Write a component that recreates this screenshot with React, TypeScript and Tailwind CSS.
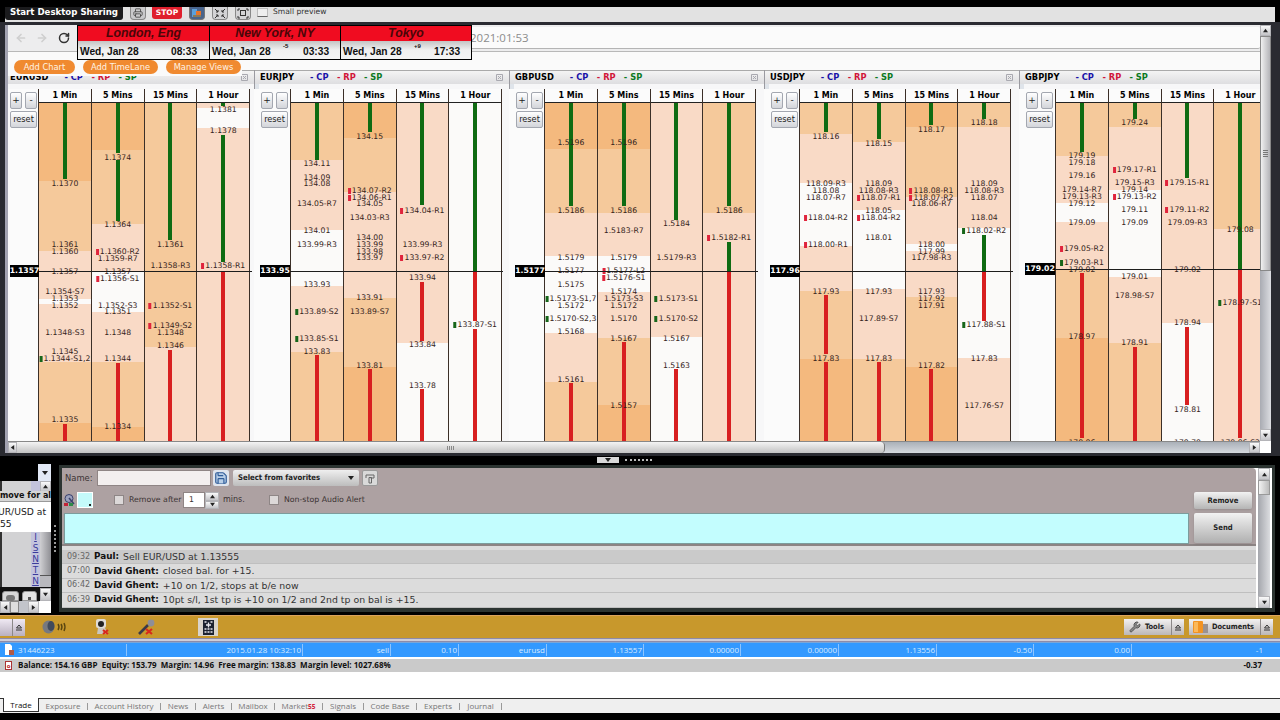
import React from 'react';
import { RotateCw, ArrowLeft, ArrowRight, Printer, Save, Wrench } from 'lucide-react';

type Mark = 'r' | 'g';
type Label = [y: number, text: string, mark?: Mark];

interface Lane {
  zones: [end: number, shade: number][];
  bars: [from: number, to: number, color: Mark][];
  labels: Label[];
}

interface Pair {
  name: string;
  price: string;
  priceY: number;
  width: string;
  gutter: string;
  lanes: Lane[];
}

// ladder body starts at this line, all y values below are screen lines
const TOP = 103;

const SHADES = ['bg-[#fbfaf9]', 'bg-[#f9dac6]', 'bg-[#f5c99b]', 'bg-[#f4b97e]'];
const FRAMES = ['1 Min', '5 Mins', '15 Mins', '1 Hour'];

const PAIRS: Pair[] = [
  {
    name: 'EURUSD', price: '1.1357', priceY: 271, width: 'w-[246px]', gutter: 'w-[30px]',
    lanes: [
      {
        zones: [[181, 3], [251, 2], [299, 1], [304, 0], [362, 1], [423, 2], [441, 3]],
        bars: [[103, 179, 'g'], [424, 441, 'r']],
        labels: [[184, '1.1370'], [245, '1.1361'], [252, '1.1360'], [272, '1.1357'], [292, '1.1354-S7'], [299, '1.1353'], [305.5, '1.1352'], [333, '1.1348-S3'], [352, '1.1345'], [359, '1.1344-S1,2', 'g'], [419.5, '1.1335']],
      },
      {
        zones: [[150, 3], [224, 2], [272, 1], [312, 0], [362, 1], [427, 2], [441, 3]],
        bars: [[103, 153, 'g'], [160, 221, 'g'], [363, 441, 'r']],
        labels: [[157.5, '1.1374'], [225, '1.1364'], [251.5, '1.1360-R2', 'r'], [258.5, '1.1359-R7'], [272, '1.1357'], [279, '1.1356-S1', 'r'], [305.5, '1.1352-S3'], [312, '1.1351'], [333, '1.1348'], [359, '1.1344'], [426.5, '1.1334']],
      },
      {
        zones: [[347, 2], [441, 1]],
        bars: [[103, 240, 'g'], [350, 441, 'r']],
        labels: [[245, '1.1361'], [265.5, '1.1358-R3'], [305.5, '1.1352-S1', 'r'], [326, '1.1349-S2', 'r'], [333, '1.1348'], [346, '1.1346']],
      },
      {
        zones: [[108, 1], [128, 0], [441, 1]],
        bars: [[103, 106, 'g'], [135, 262, 'g'], [272, 441, 'r']],
        labels: [[110, '1.1381'], [131, '1.1378'], [265.5, '1.1358-R1', 'r']],
      },
    ],
  },
  {
    name: 'EURJPY', price: '133.95', priceY: 271, width: 'w-[255px]', gutter: 'w-[36px]',
    lanes: [
      {
        zones: [[160, 2], [230, 1], [286, 0], [352, 1], [441, 2]],
        bars: [[103, 160, 'g'], [355, 441, 'r']],
        labels: [[164, '134.11'], [178, '134.09'], [184, '134.08'], [204, '134.05-R7'], [231, '134.01'], [245, '133.99-R3'], [285, '133.93'], [312, '133.89-S2', 'g'], [339, '133.85-S1', 'g'], [352, '133.83']],
      },
      {
        zones: [[138, 3], [192, 2], [298, 1], [367, 2], [441, 3]],
        bars: [[103, 132, 'g'], [369, 441, 'r']],
        labels: [[136.5, '134.15'], [190.5, '134.07-R2', 'r'], [197.5, '134.06-R1', 'r'], [204, '134.05'], [217.5, '134.03-R3'], [238, '134.00'], [245, '133.99'], [252, '133.98'], [257.5, '133.97'], [298, '133.91'], [312, '133.89-S7'], [366, '133.81']],
      },
      {
        zones: [[343, 1], [441, 0]],
        bars: [[103, 205, 'g'], [282, 341, 'r'], [389, 441, 'r']],
        labels: [[211, '134.04-R1', 'r'], [245, '133.99-R3'], [258, '133.97-R2', 'r'], [278, '133.94'], [345, '133.84'], [386, '133.78']],
      },
      {
        zones: [[441, 0]],
        bars: [[103, 271, 'g'], [271, 321, 'r'], [329, 441, 'r']],
        labels: [[325, '133.87-S1', 'g']],
      },
    ],
  },
  {
    name: 'GBPUSD', price: '1.5177', priceY: 271, width: 'w-[255px]', gutter: 'w-[35px]',
    lanes: [
      {
        zones: [[149, 3], [213, 2], [256, 1], [333, 0], [382, 1], [441, 2]],
        bars: [[103, 206, 'g'], [383, 441, 'r']],
        labels: [[143, '1.5196'], [211, '1.5186'], [258, '1.5179'], [271, '1.5177'], [285, '1.5175'], [298.5, '1.5173-S1,7', 'g'], [305.5, '1.5172'], [319, '1.5170-S2,3', 'g'], [332, '1.5168'], [380, '1.5161']],
      },
      {
        zones: [[149, 3], [213, 2], [256, 1], [292, 0], [338, 1], [405, 2], [441, 3]],
        bars: [[103, 206, 'g'], [342, 441, 'r']],
        labels: [[143, '1.5196'], [211, '1.5186'], [231, '1.5183-R7'], [258, '1.5179'], [271, '1.5177-L2', 'r'], [278, '1.5176-S1', 'r'], [292, '1.5174'], [298.5, '1.5173-S3'], [305.5, '1.5172'], [319, '1.5170'], [339, '1.5167'], [406, '1.5157']],
      },
      {
        zones: [[337, 1], [441, 0]],
        bars: [[103, 220, 'g'], [369, 441, 'r']],
        labels: [[224, '1.5184'], [258, '1.5179-R3'], [298.5, '1.5173-S1', 'g'], [319, '1.5170-S2', 'g'], [339, '1.5167'], [366, '1.5163']],
      },
      {
        zones: [[213, 2], [441, 1]],
        bars: [[103, 206, 'g'], [242, 271, 'g'], [271, 441, 'r']],
        labels: [[211, '1.5186'], [238, '1.5182-R1', 'r']],
      },
    ],
  },
  {
    name: 'USDJPY', price: '117.96', priceY: 271, width: 'w-[255px]', gutter: 'w-[35px]',
    lanes: [
      {
        zones: [[134, 2], [183, 1], [246, 0], [291, 1], [359, 2], [441, 3]],
        bars: [[103, 132, 'g'], [295, 354, 'r'], [362, 441, 'r']],
        labels: [[136.5, '118.16'], [183.5, '118.09-R3'], [190.5, '118.08'], [197.5, '118.07-R7'], [217.5, '118.04-R2', 'r'], [245, '118.00-R1', 'r'], [292, '117.93'], [359, '117.83']],
      },
      {
        zones: [[142, 2], [210, 1], [289, 0], [359, 1], [441, 2]],
        bars: [[103, 139, 'g'], [362, 441, 'r']],
        labels: [[143.5, '118.15'], [183.5, '118.09'], [190.5, '118.08-R3'], [197.5, '118.07-R1', 'r'], [211, '118.05'], [217.5, '118.04-R2', 'r'], [238, '118.01'], [292, '117.93'], [319, '117.89-S7'], [359, '117.83']],
      },
      {
        zones: [[127, 3], [197, 2], [244, 1], [251, 0], [297, 1], [367, 2], [441, 3]],
        bars: [[103, 125, 'g'], [369, 441, 'r']],
        labels: [[130, '118.17'], [190.5, '118.08-R1', 'r'], [197.5, '118.07-R2', 'r'], [204, '118.06-R7'], [245, '118.00'], [252, '117.99'], [258, '117.98-R3'], [292, '117.93'], [298.5, '117.92'], [305.5, '117.91'], [366, '117.82']],
      },
      {
        zones: [[127, 2], [228, 1], [358, 0], [441, 1]],
        bars: [[103, 119, 'g'], [235, 271, 'g'], [271, 321, 'r']],
        labels: [[123, '118.18'], [183.5, '118.09'], [190.5, '118.08-R3'], [197.5, '118.07'], [217.5, '118.04'], [231, '118.02-R2', 'g'], [325, '117.88-S1', 'g'], [359, '117.83'], [406, '117.76-S7']],
      },
    ],
  },
  {
    name: 'GBPJPY', price: '179.02', priceY: 269, width: 'w-[255px]', gutter: 'w-[36px]',
    lanes: [
      {
        zones: [[156, 2], [203, 1], [222, 0], [270, 1], [338, 2], [441, 3]],
        bars: [[103, 152, 'g'], [273, 438, 'r']],
        labels: [[156, '179.19'], [163, '179.18'], [176, '179.16'], [190, '179.14-R7'], [197, '179.13-R3'], [203.5, '179.12'], [223, '179.09'], [249, '179.05-R2', 'r'], [263, '179.03-R1', 'g'], [270, '179.02'], [337, '178.97'], [443, '178.86']],
      },
      {
        zones: [[127, 2], [190, 1], [277, 0], [343, 1], [441, 2]],
        bars: [[103, 119, 'g'], [347, 441, 'r']],
        labels: [[123, '179.24'], [170, '179.17-R1', 'r'], [183, '179.15-R3'], [190, '179.14'], [197, '179.13-R2', 'r'], [209.5, '179.11'], [223, '179.09'], [277, '179.01'], [296, '178.98-S7'], [343, '178.91']],
      },
      {
        zones: [[323, 1], [441, 0]],
        bars: [[103, 178, 'g'], [327, 405, 'r']],
        labels: [[183, '179.15-R1', 'r'], [209.5, '179.11-R2', 'r'], [223, '179.09-R3'], [270, '179.02'], [323, '178.94'], [410, '178.81'], [443, '178.78']],
      },
      {
        zones: [[229, 2], [441, 1]],
        bars: [[103, 269, 'g'], [269, 438, 'r']],
        labels: [[230, '179.08'], [303, '178.97-S1', 'g'], [443, '178.86-S2']],
      },
    ],
  },
];

const CLOCKS = [
  { city: 'London, Eng', offset: '', time: '08:33' },
  { city: 'New York, NY', offset: '-5', time: '03:33' },
  { city: 'Tokyo', offset: '+9', time: '17:33' },
];

const MESSAGES = [
  { time: '09:32', who: 'Paul:', text: 'Sell EUR/USD at 1.13555' },
  { time: '07:00', who: 'David Ghent:', text: 'closed bal. for +15.' },
  { time: '06:42', who: 'David Ghent:', text: '+10 on 1/2, stops at b/e now' },
  { time: '06:39', who: 'David Ghent:', text: '10pt s/l, 1st tp is +10 on 1/2 and 2nd tp on bal is +15.' },
];

const ORDER_CELLS: [string, string][] = [
  ['w-[176px]', '2015.01.28 10:32:10'],
  ['w-[88px]', 'sell'],
  ['w-[68px]', '0.10'],
  ['w-[88px]', 'eurusd'],
  ['w-[97px]', '1.13557'],
  ['w-[97px]', '0.00000'],
  ['w-[98px]', '0.00000'],
  ['w-[98px]', '1.13556'],
  ['w-[97px]', '-0.50'],
  ['w-[98px]', '0.00'],
];

const TABS: [string, string][] = [
  ['Exposure', 'w-[49px]'],
  ['Account History', 'w-[73px]'],
  ['News', 'w-[35px]'],
  ['Alerts', 'w-[36px]'],
  ['Mailbox', 'w-[43px]'],
  ['Market', 'w-[48px]'],
  ['Signals', 'w-[41px]'],
  ['Code Base', 'w-[53px]'],
  ['Experts', 'w-[43px]'],
  ['Journal', 'w-[42px]'],
];

const Arrow: React.FC<{ d: 'up' | 'down' | 'left' | 'right'; size?: number }> = ({ d, size = 6 }) => {
  const pts = { up: '0,5 3,1 6,5', down: '0,1 3,5 6,1', left: '5,0 1,3 5,6', right: '1,0 5,3 1,6' }[d];
  return (
    <svg width={size} height={size} viewBox="0 0 6 6" className="shrink-0">
      <polygon points={pts} fill="#222" />
    </svg>
  );
};

const ScrollButton: React.FC<{ d: 'up' | 'down' | 'left' | 'right'; className?: string }> = ({ d, className = '' }) => (
  <div className={`flex shrink-0 items-center justify-center border border-[#b4b4b8] bg-linear-to-b from-[#fafafa] to-[#c4c4c8] ${className}`}>
    <Arrow d={d} size={5} />
  </div>
);

const SmallButton: React.FC<{ className?: string; children: React.ReactNode }> = ({ className = '', children }) => (
  <div className={`flex items-center justify-center rounded-[2px] border border-[#a3a7b0] bg-linear-to-b from-white to-[#d3d5da] text-[#222] ${className}`}>
    {children}
  </div>
);

const LaneView: React.FC<{ title: string; lane: Lane; last: boolean }> = ({ title, lane, last }) => (
  <div className={`flex shrink-0 flex-col border-l border-[#3b2f28] ${last ? 'w-[53.8px] border-r' : 'w-[52.8px]'}`}>
    <div className="flex h-[14px] items-center justify-center border-b border-[#222] bg-[#fbfbfb] text-[8px] font-bold leading-none text-black">
      {title}
    </div>
    <div className="relative flex h-[338px] flex-col overflow-hidden">
      {lane.zones.map(([end, shade], i) => (
        <div
          key={end}
          className={`shrink-0 ${SHADES[shade]}`}
          style={{ height: end - (i ? lane.zones[i - 1][0] : TOP) }}
        />
      ))}
      {lane.bars.map(([from, to, color]) => (
        <div
          key={from}
          className={`absolute left-1/2 w-[4px] -translate-x-1/2 ${color === 'g' ? 'bg-[#0f6b12]' : 'bg-[#d81f20]'}`}
          style={{ top: from - TOP, height: to - from }}
        />
      ))}
      {lane.labels.map(([y, text, mark]) => (
        <div
          key={y}
          className="absolute left-1/2 flex h-[8px] -translate-x-1/2 items-center gap-px whitespace-nowrap text-[7.7px] leading-none text-[#35241b]"
          style={{ top: y - TOP - 4 }}
        >
          {mark && <span className={`h-[6px] w-[3px] ${mark === 'g' ? 'bg-[#17661a]' : 'bg-[#e0243c]'}`} />}
          {text}
        </div>
      ))}
    </div>
  </div>
);

const PairPanel: React.FC<{ pair: Pair; first: boolean }> = ({ pair, first }) => (
  <div className={`relative flex shrink-0 flex-col bg-[#f7f7f8] ${pair.width} ${first ? '' : 'border-l border-[#9a9aa0]'}`}>
    <div className={`flex h-[14px] items-center border-t border-[#aaa] bg-linear-to-b from-[#f4f4f4] to-[#dedee0] text-[8.3px] leading-none ${first ? 'pl-[2px]' : 'pl-[5px]'}`}>
      <span className="font-bold text-black">{pair.name}</span>
      <span className="ml-[16px] w-[27px] font-bold text-[#1a12a8]">- CP</span>
      <span className="w-[27px] font-bold text-[#d11539]">- RP</span>
      <span className="font-bold text-[#0c7a22]">- SP</span>
      <svg className="ml-auto mr-[6px]" width="7" height="7" viewBox="0 0 7 7" fill="none" stroke="#a9a9b0">
        <path d="M.5.5h6v6h-6zM2 2l3 3M5 2L2 5" />
      </svg>
    </div>
    <div className={`flex pt-[5px] ${first ? '' : 'border-l-4 border-[#dfe4ea]'}`}>
      <div className={`shrink-0 bg-[#fbfbfb] ${pair.gutter} ${first ? 'pl-[2px]' : '-ml-[5px] pl-[7px]'}`}>
        <div className="mt-[3px] flex gap-[3px] text-[9px] leading-none">
          <SmallButton className="h-[17px] w-[12px]">+</SmallButton>
          <SmallButton className="h-[17px] w-[12px]">-</SmallButton>
        </div>
        <SmallButton className="mt-[2px] h-[17px] w-[27px] text-[8.2px] leading-none">reset</SmallButton>
      </div>
      {pair.lanes.map((lane, i) => (
        <LaneView key={FRAMES[i]} title={FRAMES[i]} lane={lane} last={i === 3} />
      ))}
    </div>
    {/* current price marker */}
    <div className="absolute left-0 flex h-[12px] w-full items-center" style={{ top: pair.priceY - 76 }}>
      <span className={`flex h-[12px] shrink-0 items-center justify-center bg-black text-[7.7px] font-bold leading-none text-white ${first ? 'ml-[2px] w-[29px]' : 'ml-[5px] w-[30px]'}`}>
        {pair.price}
      </span>
      <span className="h-px w-[213px] shrink-0 bg-[#1d1d1d]" />
    </div>
  </div>
);

const SharingBar: React.FC = () => (
  <div className="mx-[5px] flex h-[15px] items-start overflow-hidden bg-[#e2e2e2] pr-2">
    <div className="flex h-[13px] w-[118px] items-center justify-center rounded-b-[3px] bg-[#1b1b1d] text-[8.6px] font-bold leading-none text-white">
      <span className="mb-[3px] whitespace-nowrap">Start Desktop Sharing</span>
    </div>
    <div className="ml-[7px] flex h-[13px] w-[16px] items-center justify-center rounded-b border border-t-0 border-[#888] bg-[#c9c9cb]">
      <Printer size={10} className="text-[#444]" />
    </div>
    <div className="ml-[6px] flex h-[12px] w-[30px] items-center justify-center rounded-b-[3px] bg-[#df1f2d] text-[7.5px] font-bold leading-none text-white">STOP</div>
    <div className="ml-[7px] flex h-[13px] w-[16px] items-center justify-center rounded-b border border-t-0 border-[#777] bg-[#49648c]">
      <svg width="10" height="9" viewBox="0 0 10 9">
        <rect x="0" y="0" width="5" height="8" fill="#5aa0dc" />
        <rect x="4" y="2" width="5" height="5" fill="#e8742a" />
        <rect x="1" y="6" width="8" height="2" fill="#8a7a5a" />
      </svg>
    </div>
    <div className="ml-[7px] flex h-[13px] w-[16px] items-center justify-center rounded-b border border-t-0 border-[#888] bg-[#d3d3d5]">
      <svg width="12" height="11" viewBox="0 0 12 11" stroke="#333" fill="none">
        <path d="M1 1l3 3M11 1L8 4M1 10l3-3M11 10L8 7M4 2v2H2M8 2v2h2M4 9V7H2M8 9V7h2" />
      </svg>
    </div>
    <div className="ml-[7px] flex h-[13px] w-[16px] items-center justify-center rounded-b border border-t-0 border-[#888] bg-[#d3d3d5]">
      <svg width="12" height="11" viewBox="0 0 12 11" stroke="#333" fill="none">
        <rect x="3.5" y="2.5" width="5" height="5" />
        <path d="M1 3V1h2M9 1h2v2M1 8v2h2M9 10h2V8" />
      </svg>
    </div>
    <div className="ml-[6px] mt-px h-[9px] w-[11px] border border-[#bbb] border-b-[#666] bg-[#eee]" />
    <span className="ml-[5px] mt-[1px] text-[7.6px] leading-none text-[#333]">Small preview</span>
  </div>
);

const WorldClock: React.FC = () => (
  <div className="absolute left-[77px] top-[25px] z-20 flex border border-black bg-[#ececec] font-['Liberation_Sans',sans-serif]">
    {CLOCKS.map((c, i) => (
      <div key={c.city} className={`h-[33px] w-[131px] ${i ? 'border-l border-black' : ''}`}>
        <div className="flex h-[15px] items-center justify-center bg-[#f00c20] text-[12.3px] font-bold italic leading-none text-[#4a0608]">
          {c.city}
        </div>
        <div className="flex h-[18px] items-center bg-linear-to-b from-[#c4c4c4] via-[#f0f0f0] to-[#f4f4f4] pl-[2px] text-[10.2px] font-bold leading-none text-[#111]">
          <span className="mt-[4px] w-[71px]">Wed, Jan 28</span>
          <span className="-mt-[8px] w-[20px] text-[6px]">{c.offset}</span>
          <span className="mt-[4px]">{c.time}</span>
        </div>
      </div>
    ))}
  </div>
);

const Pill: React.FC<{ className: string; children: React.ReactNode }> = ({ className, children }) => (
  <div className={`flex h-[14px] items-center justify-center rounded-full bg-[#f08a30] text-[8.3px] leading-none text-[#fff3e4] ${className}`}>
    {children}
  </div>
);

const BrowserPane: React.FC = () => (
  <div className="flex h-[434px] border-x-[5px] border-t-[3px] border-b-[3px] border-[#2a2b31] bg-[#2a2b31]">
    <div className="w-[3px] shrink-0 bg-[#a3a3b1]" />
    <div className="flex w-[1252px] shrink-0 flex-col overflow-hidden bg-[#fafafa]">
      <div className="flex h-[27px] shrink-0 items-center border-b border-[#b8b8b8] bg-[#ededee] pl-[7px]">
        <ArrowLeft size={12} strokeWidth={3.4} className="text-[#cfcfcf]" />
        <ArrowRight size={12} strokeWidth={3.4} className="ml-[9px] text-[#cfcfcf]" />
        <RotateCw size={12} strokeWidth={3} className="ml-[10px] text-[#333]" />
        <div className="ml-[9px] flex h-[22px] flex-1 items-center rounded-[2px] border-b border-[#b4b4b4] bg-[#fbfbfb] pl-[391px] font-['Open_Sans',sans-serif] text-[11.5px] text-[#8c8c8c]">
          2021:01:53
        </div>
      </div>
      <div className="h-[18px] shrink-0" />
      <div className="flex h-[371px] shrink-0 overflow-hidden">
        {PAIRS.map((pair, i) => (
          <PairPanel key={pair.name} pair={pair} first={i === 0} />
        ))}
      </div>
      <div className="flex h-[12px] shrink-0 border-t border-[#888] bg-linear-to-b from-[#aab0b8] to-[#d5d9de]">
        <ScrollButton d="left" className="w-[9px]" />
        <div className="flex w-[868px] items-center justify-center rounded-r-[4px] border-r border-[#777] bg-linear-to-b from-[#f4f4f4] to-[#c2c2c2]">
          <div className="flex gap-px">
            {[0, 1, 2, 3].map((n) => <span key={n} className="h-[4px] w-px bg-[#888]" />)}
          </div>
        </div>
        <ScrollButton d="right" className="ml-auto w-[11px]" />
      </div>
    </div>
    <div className="flex w-[11px] shrink-0 flex-col bg-white">
      <ScrollButton d="up" className="h-[11px] w-full" />
      <div className="flex h-[235px] flex-col items-center justify-center gap-px border border-[#888] bg-linear-to-r from-[#f0f0f0] to-[#b4b4b8]">
        {[0, 1, 2, 3].map((n) => <span key={n} className="h-px w-[5px] bg-[#777]" />)}
      </div>
      <div className="h-[158px] bg-linear-to-r from-[#a9abb2] to-[#dcdde1]" />
      <ScrollButton d="down" className="h-[12px] w-full" />
    </div>
  </div>
);

const SideFragment: React.FC = () => (
  <div className="relative flex h-[149px] w-[51px] shrink-0 flex-col overflow-hidden">
    <div className="flex h-[17px] shrink-0 justify-end">
      <div className="flex w-[13px] items-center justify-center bg-[#e2e9f6]"><Arrow d="down" /></div>
    </div>
    <div className="flex h-[106px] shrink-0 bg-[#d2d2d4]">
      <div className="w-[31px] border-l-2 border-[#333]" />
      <div className="flex w-[9px] flex-col items-center justify-end bg-[#c3c3dc] text-[9px] leading-[11px] text-[#3a3a9c] underline">
        <span>I</span><span>S</span><span>N</span><span>T</span><span>N</span>
      </div>
      <div className="flex w-[11px] flex-col">
        <ScrollButton d="up" className="h-[11px] w-full" />
        <div className="h-[84px] border-b border-[#555] bg-linear-to-r from-[#cfcfd2] to-[#8f8f94]" />
        <div className="flex-1 bg-[#b9b9be]" />
      </div>
    </div>
    <div className="flex h-[14px] items-end gap-[3px] bg-[#111]">
      <div className="ml-[2px] h-[10px] w-[18px] rounded-t-[3px] border border-[#999] bg-[#d8d8d8] px-[3px] pt-[3px]"><div className="h-[6px] rounded-full bg-[#777]" /></div>
      <div className="h-[10px] w-[15px] rounded-t-[3px] border border-[#999] bg-[#e4e4e4] px-[5px] pt-[5px]"><div className="h-[3px] bg-[#555]" /></div>
      <ScrollButton d="down" className="ml-auto h-[13px] w-[11px]" />
    </div>
    <div className="flex h-[12px] bg-[#c2c4ca]">
      <ScrollButton d="left" className="w-[10px]" />
      <div className="w-[9px] border border-[#888] bg-[#dedede]" />
      <ScrollButton d="right" className="ml-[9px] w-[11px]" />
      <div className="ml-auto w-[12px] bg-white" />
    </div>
    {/* popup cut off by the window edge */}
    <div className="absolute left-0 top-[27px] w-[51px] whitespace-nowrap bg-white">
      <div className="flex h-[11px] items-center border-b border-[#999] bg-[#d5d5d5] text-[8px] font-bold leading-none text-[#111]">move for all</div>
      <div className="h-[30px] -indent-[2px] pt-[4px] text-[9.2px] leading-[11.5px] text-[#222]">UR/USD at<br />55</div>
    </div>
  </div>
);

const CheckBox: React.FC<{ className?: string }> = ({ className = '' }) => (
  <span className={`h-[10px] w-[10px] shrink-0 border border-[#8e8686] bg-[#dcd8d8] ${className}`} />
);

const ChatPane: React.FC = () => (
  <div className="mr-[5px] mt-px flex h-[147px] min-w-0 flex-1 border-[3px] border-b-4 border-[#2c3431] bg-white">
    <div className="flex w-[1194px] shrink-0 flex-col">
      <div className="flex h-[78px] shrink-0 rounded-tr-[4px] border-b-2 border-[#8c8484] bg-[#ada1a2] pl-[2px] pt-px">
        <div className="flex w-[1125px] shrink-0 flex-col text-[7.8px] leading-none text-[#3b3333]">
          <div className="flex h-[18px] items-center pl-px">
            <span className="w-[32px] text-[8.4px]">Name:</span>
            <span className="h-[16px] w-[114px] border border-[#8f8585] bg-[#f3efef]" />
            <span className="ml-[2px] flex size-[16px] items-center justify-center rounded-[2px] bg-[#dfe5ee]">
              <Save size={14} className="text-[#2f5c98]" fill="#b9cfe8" />
            </span>
            <span className="ml-[4px] flex h-[16px] w-[126px] items-center justify-between rounded-[2px] bg-linear-to-b from-[#efefef] to-[#bdbdbd] pl-[5px] pr-[5px] font-['DejaVu_Sans_Condensed','DejaVu_Sans',sans-serif] text-[7.7px] font-bold text-[#222]">
              Select from favorites
              <Arrow d="down" />
            </span>
            <span className="ml-[3px] flex size-[16px] items-center justify-center rounded-[2px] border border-[#999] bg-[#d9d9d9]">
              <svg width="10" height="11" viewBox="0 0 10 11" fill="none" stroke="#666">
                <path d="M1 5V2h8v3H5.5M4 4.500h2.500v5.500H4z" />
              </svg>
            </span>
          </div>
          <div className="flex h-[26px] items-center">
            <svg width="11" height="13" viewBox="0 0 11 13">
              <circle cx="5" cy="4.5" r="4" fill="#9aa0bc" stroke="#39406a" />
              <path d="M5 4l5 6" stroke="#39406a" strokeWidth="1.5" />
              <rect x="0" y="9" width="4" height="3" fill="#c22336" />
              <rect x="5" y="9" width="4" height="3" fill="#2c8a48" />
            </svg>
            <span className="ml-[2px] flex size-[16px] items-end justify-end border border-white bg-[#c4fafa] p-px"><i className="size-[2px] bg-[#222]" /></span>
            <CheckBox className="ml-[21px]" />
            <span className="ml-[5px] w-[54px]">Remove after</span>
            <span className="flex h-[16px] w-[22px] items-center border border-[#8f8585] bg-white pl-[5px]">1</span>
            <span className="flex flex-col">
              <ScrollButton d="up" className="h-[9px] w-[14px]" />
              <ScrollButton d="down" className="h-[8px] w-[14px]" />
            </span>
            <span className="ml-[4px] w-[46px] text-[8px]">mins.</span>
            <CheckBox />
            <span className="ml-[5px] whitespace-nowrap">Non-stop Audio Alert</span>
          </div>
          <div className="h-[31px] border border-[#7c9c9c] bg-[#c3fdfe]" />
        </div>
        <div className="ml-[5px] flex flex-col gap-[4px] pt-[23px] font-['DejaVu_Sans_Condensed','DejaVu_Sans',sans-serif] text-[7.6px] font-bold leading-none text-[#222]">
          <div className="flex h-[17px] w-[58px] items-center justify-center rounded-[2px] bg-linear-to-b from-[#f2f2f2] to-[#b5b5b5] shadow">Remove</div>
          <div className="flex h-[30px] w-[58px] items-center justify-center rounded-[2px] bg-linear-to-b from-[#f2f2f2] to-[#b0b0b0] shadow">Send</div>
        </div>
      </div>
      <div className="flex flex-1 flex-col overflow-hidden bg-[#dcdcdc] pt-[4px]">
        {MESSAGES.map((m, i) => (
          <div key={m.time} className={`flex h-[14.4px] shrink-0 items-center border-b border-[#bfbfbf] pl-[5px] text-[9.35px] leading-none text-[#3a3a3a] ${i === 0 ? 'bg-[#cacaca]' : 'bg-[#dcdcdc]'}`}>
            <span className="w-[27px] text-[8px] text-[#666]">{m.time}</span>
            <b className="mr-[4px] text-[8.8px] text-[#111]">{m.who}</b>
            <span className="text-[#333]">{m.text}</span>
          </div>
        ))}
      </div>
    </div>
    <div className="ml-[2px] flex w-[12px] flex-col bg-linear-to-r from-[#a4a6ac] to-[#dcdde0]">
      <ScrollButton d="up" className="h-[12px] w-full" />
      <div className="h-[15px] border border-[#999] bg-linear-to-r from-[#f2f2f2] to-[#bcbcbc]" />
      <ScrollButton d="down" className="mt-auto h-[12px] w-full" />
    </div>
  </div>
);

const PodToggle: React.FC = () => (
  <span className="flex h-full w-[13px] items-center justify-center border-l border-[#8c8888]">
    <svg width="8" height="7" viewBox="0 0 8 7"><path d="M4 1L6.500 4H1.500zM1 6h6" fill="none" stroke="#333" /></svg>
  </span>
);

const PodBar: React.FC = () => (
  <div className="flex h-[23px] items-center border-t border-[#dba35e] bg-[#c8982c] pr-[7px]">
    <div className="flex h-[17px] w-[25px] justify-end bg-linear-to-b from-[#f0eaf4] to-[#b9b0c0]">
      <PodToggle />
    </div>
    <svg className="ml-[17px]" width="26" height="16" viewBox="0 0 26 16">
      <ellipse cx="6.500" cy="8" rx="6" ry="6.5" fill="#77797f" />
      <ellipse cx="9" cy="7" rx="3.5" ry="5" fill="#414a5c" />
      <path d="M16 5q2 3 0 6M19 5q2 3 0 6M22 4q2 4 0 8" stroke="#5a4510" strokeWidth="1.4" fill="none" />
    </svg>
    <svg className="ml-[26px]" width="16" height="17" viewBox="0 0 16 17">
      <rect x="2" y="0" width="10" height="9" rx="2" fill="#e0dcd6" />
      <circle cx="7" cy="5" r="3" fill="#222" />
      <path d="M4 9h7l3 6H3z" fill="#c9c6c0" />
      <path d="M9 11l5 4M14 11l-5 4" stroke="#d8281c" strokeWidth="2.2" />
    </svg>
    <svg className="ml-[28px]" width="18" height="17" viewBox="0 0 18 17">
      <path d="M1 15L10 6" stroke="#3a3a48" strokeWidth="2.6" />
      <circle cx="13" cy="4" r="3.4" fill="#8e8e98" />
      <path d="M8 10l6 5M14 10l-6 5" stroke="#d8281c" strokeWidth="2.2" />
    </svg>
    <div className="ml-[42px] flex h-[18px] w-[20px] items-center justify-center bg-[#d9d4cc]">
      <svg width="11" height="15" viewBox="0 0 11 15">
        <rect width="11" height="15" fill="#1c2230" />
        <path d="M1.500 2h2M7.500 2h2M3 5h5M5.500 2.500v5M1.500 9h2M4.500 9h2M7.500 9h2M1.500 12h2M4.500 12h2M7.500 12h2" stroke="#e8e8ee" strokeWidth="1.3" />
      </svg>
    </div>
    <div className="ml-auto flex h-[16px] items-center bg-linear-to-b from-[#f3f1f1] to-[#bcb8b8] font-['DejaVu_Sans_Condensed','DejaVu_Sans',sans-serif] text-[7.4px] font-bold leading-none text-[#222]">
      <Wrench size={12} className="ml-[5px] text-[#555]" fill="#888" />
      <span className="ml-[4px] w-[26px]">Tools</span>
      <PodToggle />
    </div>
    <div className="ml-[5px] flex h-[16px] items-center bg-linear-to-b from-[#f3f1f1] to-[#bcb8b8] font-['DejaVu_Sans_Condensed','DejaVu_Sans',sans-serif] text-[7.4px] font-bold leading-none text-[#222]">
      <svg className="ml-[3px]" width="17" height="14" viewBox="0 0 17 14">
        <rect x="9" y="4" width="7" height="9" fill="#9a9290" />
        <rect x="1" y="1" width="10" height="12" rx="1" fill="#f39322" />
        <rect x="2" y="2" width="4" height="10" fill="#fbb85a" />
      </svg>
      <span className="ml-[3px] w-[48px] whitespace-nowrap">Documents</span>
      <PodToggle />
    </div>
  </div>
);

const Terminal: React.FC = () => (
  <div className="flex h-[75px] flex-col bg-white font-['Open_Sans',sans-serif]">
    <div className="h-[4px] border-y border-[#8e8ba8] bg-[#cfcdd8]" />
    <div className="flex h-[15px] items-center border-t border-[#7aa6d8] bg-[#3399ff] text-[8px] leading-none text-[#d9ecff]">
      <svg className="ml-[4px]" width="11" height="12" viewBox="0 0 11 12">
        <path d="M1 0h5l2 2v9H1z" fill="#fff" />
        <rect x="5" y="6" width="5" height="5" fill="#b05a48" />
      </svg>
      <span className="ml-[3px] flex h-[12px] w-[109px] items-center border-r border-[#8cc4ff]">31446223</span>
      {ORDER_CELLS.map(([w, text], i) => (
        <span key={i} className={`flex h-[12px] items-center justify-end border-r border-[#8cc4ff] pr-px ${w}`}>{text}</span>
      ))}
      <span className="ml-auto mr-[17px]">-1</span>
    </div>
    <div className="flex h-[15px] items-center border-t-2 border-white bg-[#cacaca] text-[8.03px] font-bold leading-none text-[#111]">
      <span className="ml-[5px] flex h-[9px] w-[7px] items-center justify-center border border-[#a33] bg-white text-[6px] text-[#b22]">o</span>
      <span className="ml-[6px] flex-1 whitespace-pre">Balance: 154.16 GBP  Equity: 153.79  Margin: 14.96  Free margin: 138.83  Margin level: 1027.68%</span>
      <span className="mr-[18px]">-0.37</span>
    </div>
    <div className="flex-1" />
    <div className="flex h-[15px] items-start bg-[#efefef] text-[8px] leading-none text-[#777]">
      <div className="h-full w-[3px] border-t border-[#333]" />
      <div className="flex h-[14px] w-[36px] items-center justify-center border-x border-b border-[#333] bg-white text-[#111]">Trade</div>
      <div className="flex h-full flex-1 items-center border-t border-[#333]">
        {TABS.map(([name, w]) => (
          <span key={name} className={`flex h-[7px] items-center justify-center whitespace-nowrap border-r border-[#999] ${w}`}>
            {name}
            {name === 'Market' && <i className="mt-[2px] text-[6.5px] font-bold not-italic text-[#d2203a]">55</i>}
          </span>
        ))}
      </div>
    </div>
  </div>
);

export default function App() {
  return (
    <div className="relative h-[720px] w-[1280px] overflow-hidden bg-black pt-[7px] font-['DejaVu_Sans',sans-serif]">
      <SharingBar />
      <BrowserPane />
      <WorldClock />
      {/* view buttons float over the first panel's title */}
      <div className="absolute left-[8px] top-[59px] z-10 flex h-[17px] w-[234px] items-start gap-[8px] bg-[#fafafa] pl-[6px] pt-px">
        <Pill className="w-[61px]">Add Chart</Pill>
        <Pill className="w-[75px]">Add TimeLane</Pill>
        <Pill className="w-[75px]">Manage Views</Pill>
      </div>
      <div className="flex h-[8px] items-center pl-[597px]">
        <div className="flex h-[6px] w-[22px] items-center justify-center bg-[#d9d9d9]"><Arrow d="down" /></div>
        <div className="ml-[6px] w-[27px] border-t-2 border-dotted border-[#bbb]" />
      </div>
      <div className="flex h-[151px]">
        <SideFragment />
        <div className="flex w-[8px] justify-center pt-[61px]">
          <div className="h-[27px] border-l-2 border-dotted border-[#999]" />
        </div>
        <ChatPane />
      </div>
      <PodBar />
      <Terminal />
    </div>
  );
}
